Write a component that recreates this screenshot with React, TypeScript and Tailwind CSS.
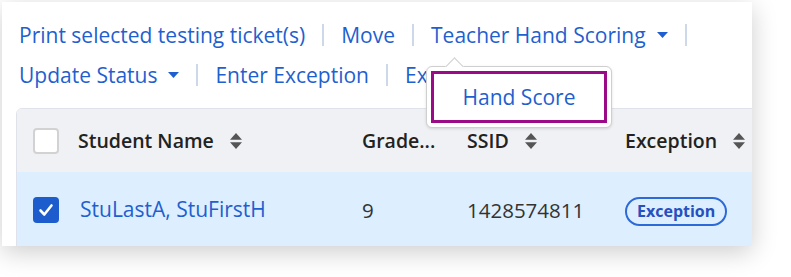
import React from 'react';

const font = { fontFamily: '"Open Sans", "Noto Sans", sans-serif' };

const Caret = () => (
  <svg width="11" height="6" viewBox="0 0 11 6" className="ml-[11px] inline-block" aria-hidden>
    <path d="M0 0h11L5.5 6z" fill="#1f5fcf" />
  </svg>
);

const SortIcon = () => (
  <svg width="12" height="16" viewBox="0 0 12 16" className="ml-4 inline-block" aria-hidden>
    <path d="M6 0L12 6.8H0z" fill="#555" />
    <path d="M6 16L12 9.2H0z" fill="#555" />
  </svg>
);

const Sep = () => <span className="w-[2px] h-[22px] bg-[#cdd8ea] mx-[17px]" />;

const Link: React.FC<{ children: React.ReactNode; caret?: boolean }> = ({ children, caret }) => (
  <span className="flex items-center text-[#1f5fcf] text-[21px] leading-[40px] whitespace-nowrap">
    {children}
    {caret && <Caret />}
  </span>
);

export default function App() {
  return (
    <div className="w-[791px] h-[277px] bg-white overflow-hidden" style={font}>
      <div className="relative ml-[2px] mt-[2px] w-[750px] h-[244px] bg-white shadow-[0_6px_24px_rgba(0,0,0,0.2)] overflow-hidden">
        {/* action links */}
        <div className="pl-[17px] pt-[13px] pr-2 flex flex-wrap items-center">
          <Link>Print selected testing ticket(s)</Link>
          <Sep />
          <Link>Move</Link>
          <Sep />
          <Link caret>Teacher Hand Scoring</Link>
          <Sep />
          <Link caret>Update Status</Link>
          <Sep />
          <Link>Enter Exception</Link>
          <Sep />
          <Link>Export</Link>
        </div>

        {/* table */}
        <div className="ml-[14px] mt-[13px] w-[760px] border border-[#dfe2ea] rounded-tl-[6px] overflow-hidden">
          <div className="grid grid-cols-[61px_284px_105px_158px_150px] items-center h-[63px] bg-[#f0f1f5] text-[19.5px] font-semibold text-[#222]">
            <div className="pl-[16px]">
              <span className="block w-[26px] h-[26px] rounded-[4px] border-2 border-[#d2d2d2] bg-white" />
            </div>
            <div className="flex items-center">Student Name<SortIcon /></div>
            <div className="whitespace-nowrap">Grade...</div>
            <div className="flex items-center">SSID<SortIcon /></div>
            <div className="flex items-center">Exception<SortIcon /></div>
          </div>
          <div className="grid grid-cols-[61px_284px_105px_158px_150px] items-center h-[76px] bg-[#ddeefe] text-[20.5px] text-[#333]">
            <div className="pl-[16px]">
              <span className="flex items-center justify-center w-[26px] h-[26px] rounded-[4px] bg-[#1c5ccc]">
                <svg width="16" height="14" viewBox="0 0 16 14" aria-hidden>
                  <path d="M2.5 7.5l3.8 4L13.5 2.5" stroke="#fff" strokeWidth="2.6" fill="none" strokeLinecap="round" strokeLinejoin="round" />
                </svg>
              </span>
            </div>
            <div className="pl-[2px] text-[21px] text-[#1f5fcf]">StuLastA, StuFirstH</div>
            <div>9</div>
            <div>1428574811</div>
            <div>
              <span className="inline-flex items-center h-[29px] px-[10px] rounded-full border-2 border-[#2d6ad8] text-[16px] font-bold text-[#2450c0]">
                Exception
              </span>
            </div>
          </div>
        </div>

        {/* hand scoring dropdown */}
        <div className="absolute left-[424px] top-[64px] w-[186px] h-[62px] bg-white border border-[#cfcfcf] rounded-[6px] shadow-[0_1px_3px_rgba(0,0,0,0.12)] p-[4px]">
          <span className="absolute -top-[7px] left-[21px] w-[13px] h-[13px] bg-white border-l border-t border-[#cfcfcf] rotate-45" />
          <div className="relative h-full border-[3px] border-[#9b0a87] flex items-center justify-center pt-[2px] text-[21px] text-[#1f5fcf]">
            Hand Score
          </div>
        </div>
      </div>
    </div>
  );
}
